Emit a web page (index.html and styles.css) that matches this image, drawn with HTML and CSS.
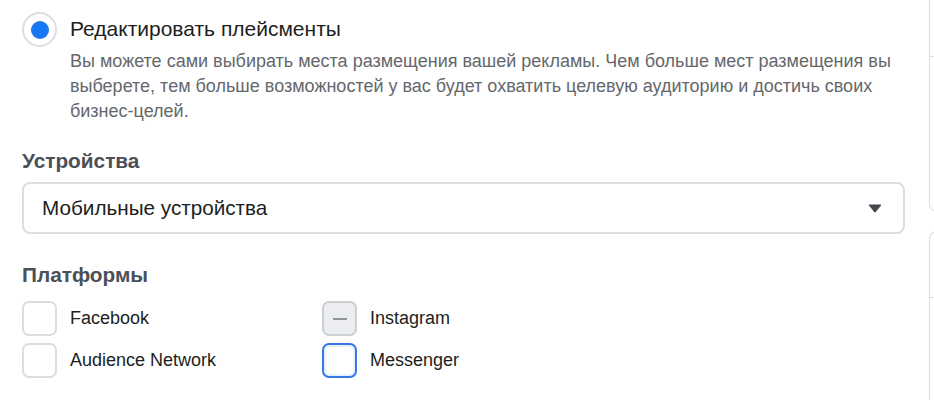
FILE: index.html
```html
<!DOCTYPE html>
<html lang="ru">
<head>
    <meta charset="UTF-8">
    <title>Плейсменты</title>
    <link rel="stylesheet" href="styles.css">
</head>
<body>
    <div class="page">
        <div class="main">
            <div class="radio-row">
                <span class="radio"><span class="radio-dot"></span></span>
                <div class="radio-text">
                    <div class="radio-title">Редактировать плейсменты</div>
                    <p class="radio-desc">Вы можете сами выбирать места размещения вашей рекламы. Чем больше мест размещения вы выберете, тем больше возможностей у вас будет охватить целевую аудиторию и достичь своих бизнес-целей.</p>
                </div>
            </div>

            <h3 class="section-title">Устройства</h3>
            <div class="select">
                <span>Мобильные устройства</span>
                <svg class="caret" width="14" height="9" viewBox="0 0 14 9"><path d="M1 1.5 Q0.5 0.5 1.8 0.5 H12.2 Q13.5 0.5 13 1.5 L8 7.8 Q7 8.8 6 7.8 Z" fill="#444950"/></svg>
            </div>

            <h3 class="section-title platforms">Платформы</h3>
            <div class="checks">
                <label class="check"><span class="box"></span>Facebook</label>
                <label class="check"><span class="box mixed"><span class="dash"></span></span>Instagram</label>
                <label class="check"><span class="box"></span>Audience Network</label>
                <label class="check"><span class="box focus"></span>Messenger</label>
            </div>
        </div>

        <div class="side">
            <div class="side-card top"><div class="side-line"></div></div>
            <div class="side-card bottom"><div class="side-line low"></div></div>
        </div>
    </div>
</body>
</html>
```

FILE: styles.css
```css
body {
    margin: 0;
    background-color: #ffffff;
    font-family: 'Liberation Sans', Arial, sans-serif;
    color: #1c1e21;
    overflow: hidden;
}

.page {
    display: flex;
    width: 934px;
    height: 400px;
    overflow: hidden;
}

.main {
    width: 883px;
    padding-left: 22px;
    flex-shrink: 0;
}

/* Radio option */
.radio-row {
    display: flex;
    align-items: flex-start;
    padding-top: 12px;
}

.radio {
    width: 31px;
    height: 31px;
    border: 2px solid #dadde1;
    border-radius: 50%;
    display: flex;
    align-items: center;
    justify-content: center;
    flex-shrink: 0;
}

.radio-dot {
    width: 18px;
    height: 18px;
    border-radius: 50%;
    background-color: #1877f2;
}

.radio-text {
    margin-left: 13px;
    padding-right: 10px;
}

.radio-title {
    font-size: 21px;
    line-height: 34px;
    color: #1c1e21;
}

.radio-desc {
    margin: 3px 0 0;
    font-size: 18px;
    line-height: 25px;
    color: #65676b;
}

/* Sections */
.section-title {
    margin: 24px 0 8px;
    font-size: 20.8px;
    font-weight: bold;
    line-height: 26px;
    color: #4b4f56;
}

.section-title.platforms {
    margin-top: 28px;
    margin-bottom: 13px;
}

.select {
    height: 48px;
    border: 2px solid #dadde1;
    border-radius: 8px;
    display: flex;
    align-items: center;
    justify-content: space-between;
    padding: 0 21px 0 18px;
    font-size: 20.7px;
    color: #1c1e21;
}

.caret {
    display: block;
}

/* Checkboxes */
.checks {
    display: grid;
    grid-template-columns: 300px 300px;
    row-gap: 7px;
}

.check {
    display: flex;
    align-items: center;
    font-size: 18px;
    color: #1c1e21;
}

.box {
    width: 31px;
    height: 31px;
    border: 2px solid #dadde1;
    border-radius: 7px;
    margin-right: 13px;
    display: flex;
    align-items: center;
    justify-content: center;
    flex-shrink: 0;
}

.box.mixed {
    background-color: #ebedf0;
    border-color: #ccd0d5;
}

.dash {
    width: 14px;
    height: 2px;
    background-color: #8d949e;
}

.box.focus {
    border-color: #3578e5;
    box-shadow: inset 0 0 0 2px #e7f0fd;
}

/* Cards peeking from the right */
.side {
    margin-left: 24px;
    flex: 1;
    display: flex;
    flex-direction: column;
    gap: 19px;
}

.side-card {
    border: 1px solid #dadde1;
    border-right: none;
    width: 200px;
}

.side-card.top {
    height: 263px;
    margin-top: -10px;
    border-top: none;
    border-radius: 0 0 0 8px;
}

.side-card.bottom {
    height: 200px;
    border-bottom: none;
    border-radius: 8px 0 0 0;
}

.side-line {
    margin-top: 66px;
    border-top: 1px solid #dadde1;
}

.side-line.low {
    margin-top: 65px;
}
```
